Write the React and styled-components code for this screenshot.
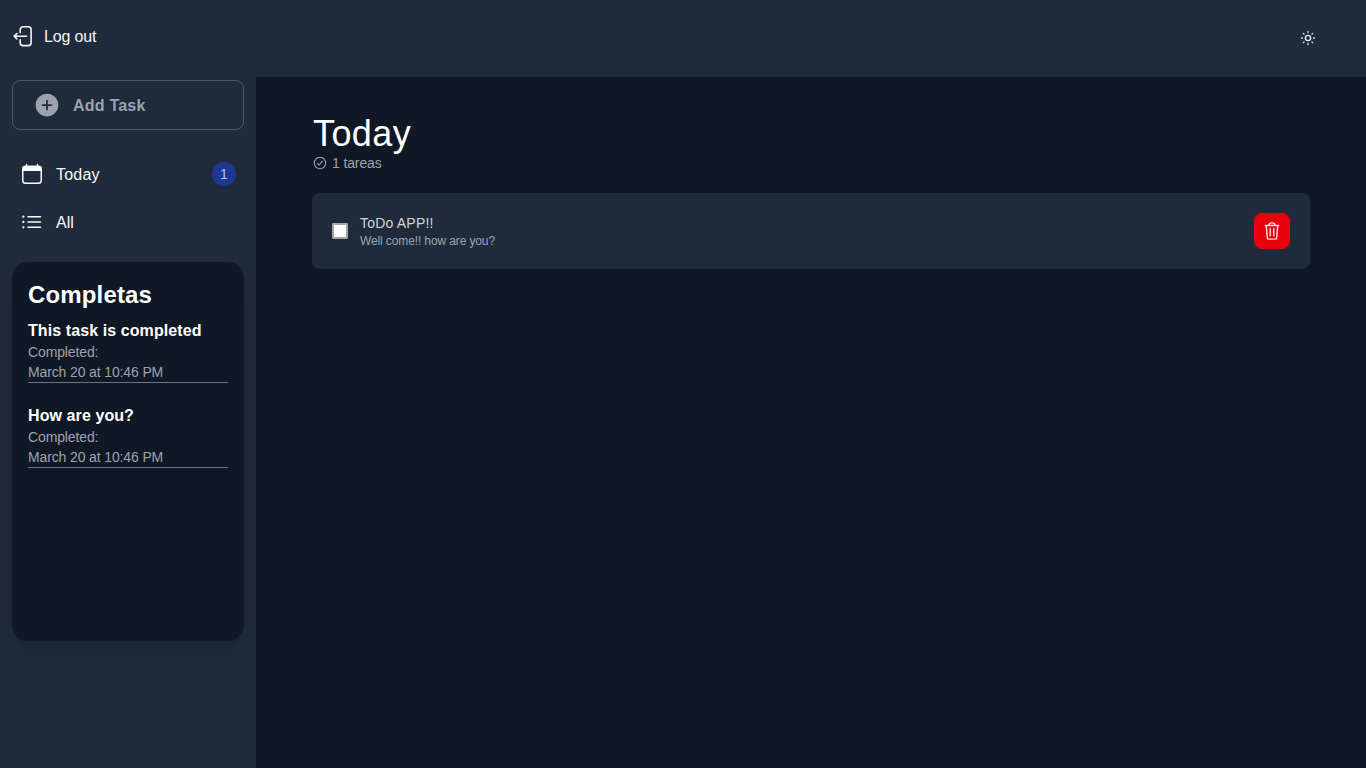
import React from "react";
import styled, { createGlobalStyle } from "styled-components";
import { IoAddCircle } from "react-icons/io5";

const GlobalStyle = createGlobalStyle`
  *, *::before, *::after { box-sizing: border-box; }
  body {
    margin: 0;
    background: #101826;
    color: #fff;
    font: 16px/24px "Liberation Sans", Arial, sans-serif;
    overflow: hidden;
  }
  h1, h2, h3, p { margin: 0; padding: 0; }
  svg { display: block; flex: none; }
`;

const Page = styled.div`
  display: flex;
  flex-direction: column;
  height: 100vh;
`;

const Header = styled.header`
  display: flex;
  align-items: center;
  justify-content: space-between;
  height: 77px;
  padding: 0 50px 4px 12px;
  background: #1f2b3a;
`;

const LogoutButton = styled.button`
  display: flex;
  align-items: center;
  gap: 10px;
  padding: 0 0 1px;
  border: 0;
  background: none;
  color: #f3f4f6;
  font: inherit;
  letter-spacing: -0.15px;
`;

const Label = styled.span`
  padding-top: ${(props) => props.$drop ?? 1}px;
`;

const ThemeButton = styled.button`
  padding: 3px 0 0;
  border: 0;
  background: none;
  color: #e5e7eb;
`;

const Body = styled.div`
  display: flex;
  flex: 1;
  min-height: 0;
`;

const Sidebar = styled.aside`
  width: 256px;
  padding: 3px 12px 0;
  background: #1f2b3a;
`;

const AddTask = styled.button`
  display: flex;
  align-items: center;
  gap: 12px;
  width: 100%;
  height: 50px;
  padding: 0 20px;
  border: 1px solid #4b5563;
  border-radius: 8px;
  background: none;
  color: #9ca3af;
  font: bold 16px/24px "Liberation Sans", Arial, sans-serif;
  letter-spacing: 0.22px;
`;

const Nav = styled.nav`
  display: flex;
  flex-direction: column;
  gap: 8px;
  margin-top: 24px;
`;

const NavItem = styled.a`
  display: flex;
  align-items: center;
  gap: 12px;
  height: 40px;
  padding: 0 8px;
  color: #f9fafb;
  letter-spacing: ${(props) => props.$tracking ?? 0}px;
`;

const Badge = styled.span`
  display: grid;
  place-items: center;
  width: 24px;
  height: 24px;
  margin-left: auto;
  border-radius: 50%;
  background: #1d3793;
  color: #a9c8f5;
  font-size: 14px;
`;

const Completed = styled.section`
  height: 379px;
  margin-top: 20px;
  padding: 17px 16px 16px;
  border-radius: 16px;
  background: #101826;
  box-shadow: 0 10px 15px -3px rgba(0, 0, 0, 0.1), 0 4px 6px -4px rgba(0, 0, 0, 0.1);
`;

const CompletedTitle = styled.h2`
  font-size: 24px;
  line-height: 32px;
  margin-bottom: 8px;
  letter-spacing: 0.15px;
`;

const CompletedItem = styled.article`
  margin-bottom: 21px;
  border-bottom: 1px solid #6b7280;
`;

const CompletedName = styled.h3`
  font-size: 16px;
  line-height: 23px;
  letter-spacing: 0.09px;
`;

const CompletedDate = styled.p`
  font-size: 14px;
  line-height: 20px;
  letter-spacing: -0.13px;
  color: #9ca3af;
`;

const Main = styled.main`
  flex: 1;
  padding: 37px 56px;
`;

const Title = styled.h1`
  padding-left: 1px;
  font-size: 36px;
  line-height: 39px;
  font-weight: 400;
  letter-spacing: 0.4px;
`;

const Count = styled.p`
  display: flex;
  align-items: center;
  gap: 5px;
  padding-left: 1px;
  font-size: 14px;
  line-height: 20px;
  letter-spacing: -0.12px;
  color: #9ca3af;
`;

const Task = styled.article`
  display: flex;
  align-items: center;
  gap: 12px;
  height: 76px;
  margin-top: 20px;
  padding: 0 20px;
  border-radius: 8px;
  background: #1f2b3a;
`;

const Checkbox = styled.span`
  width: 16px;
  height: 16px;
  border: 2px solid #a3a5a8;
  border-radius: 1px;
  background: #fff;
`;

const TaskText = styled.div`
  flex: 1;
`;

const TaskName = styled.p`
  font-size: 14px;
  line-height: 20px;
  letter-spacing: 0.2px;
  color: #d1d5db;
`;

const TaskNote = styled.p`
  font-size: 12px;
  line-height: 16px;
  letter-spacing: -0.12px;
  color: #9ca3af;
`;

const DeleteButton = styled.button`
  display: grid;
  place-items: center;
  width: 36px;
  height: 36px;
  padding: 0;
  border: 0;
  border-radius: 8px;
  background: #e7000b;
  color: #fee2e2;
`;

const completed = [
  { name: "This task is completed", date: "March 20 at 10:46 PM" },
  { name: "How are you?", date: "March 20 at 10:46 PM" },
];

function LogoutIcon() {
  return (
    <svg width="22" height="22" viewBox="0 0 22 22" fill="none" stroke="currentColor" strokeWidth="1.6" strokeLinecap="round" strokeLinejoin="round">
      <path d="M8.2 7.6V4.6a2.8 2.8 0 0 1 2.8-2.8h5.3a2.8 2.8 0 0 1 2.8 2.8v13.2a2.8 2.8 0 0 1-2.8 2.8H11a2.8 2.8 0 0 1-2.8-2.8V14.8" />
      <path d="M14.6 11.2H2.4M4.9 8.6 2.2 11.2l2.7 2.6" />
    </svg>
  );
}

function SunIcon() {
  return (
    <svg width="16" height="16" viewBox="0 0 16 16" fill="none" stroke="currentColor" strokeLinecap="round">
      <circle cx="8" cy="8" r="2.6" strokeWidth="1.4" />
      <path strokeWidth="1.3" d="M8 1.5v1M8 13.5v1M1.5 8h1M13.5 8h1M3.4 3.4l.6.6M12 12l.6.6M3.4 12.6l.6-.6M12 4l.6-.6" />
    </svg>
  );
}

function CalendarIcon() {
  return (
    <svg width="24" height="24" viewBox="0 0 24 24" fill="none" stroke="currentColor" strokeWidth="1.5">
      <rect x="2.75" y="4.4" width="18.5" height="16.8" rx="2.6" />
      <path d="M2.2 9V6.6A2.8 2.8 0 0 1 5 3.8h14a2.8 2.8 0 0 1 2.8 2.8V9z" fill="currentColor" stroke="none" />
      <path d="M6.5 2.6v2.6M17.5 2.6v2.6" strokeLinecap="round" />
    </svg>
  );
}

function ListIcon() {
  return (
    <svg width="24" height="24" viewBox="0 0 24 24" fill="none" stroke="currentColor" strokeWidth="1.5" strokeLinecap="round">
      <path d="M8 6.7h12.5M8 12h12.5M8 17.3h12.5" />
      <path d="M3.4 6.7h.01M3.4 12h.01M3.4 17.3h.01" strokeWidth="2.3" />
    </svg>
  );
}

function CheckIcon() {
  return (
    <svg width="14" height="14" viewBox="0 0 14 14" fill="none" stroke="currentColor" strokeWidth="1.1" strokeLinecap="round" strokeLinejoin="round">
      <circle cx="7" cy="7" r="5.7" />
      <path d="M4.6 7.4 6.2 9l3.3-3.9" />
    </svg>
  );
}

function TrashIcon() {
  return (
    <svg width="20" height="20" viewBox="0 0 20 20" fill="none" stroke="currentColor" strokeWidth="1.4" strokeLinecap="round" strokeLinejoin="round">
      <path d="M3.2 4.5h13.6M6.8 4.3c.2-1.5 1.3-2.4 3.2-2.4s3 .9 3.2 2.4" />
      <path d="M4.3 4.7l1 12.1a1.5 1.5 0 0 0 1.5 1.3h6.4a1.5 1.5 0 0 0 1.5-1.3l1-12.1" />
      <path d="M8.2 7.5v7.4M11.8 7.5v7.4" />
    </svg>
  );
}

export default function App() {
  return (
    <Page>
      <GlobalStyle />
      <Header>
        <LogoutButton><LogoutIcon /><Label>Log out</Label></LogoutButton>
        <ThemeButton aria-label="Theme"><SunIcon /></ThemeButton>
      </Header>
      <Body>
        <Sidebar>
          <AddTask><IoAddCircle size={28} /><Label $drop={2}>Add Task</Label></AddTask>
          <Nav>
            <NavItem $tracking={0.2}><CalendarIcon /><Label $drop={2}>Today</Label><Badge>1</Badge></NavItem>
            <NavItem><ListIcon /><Label $drop={2}>All</Label></NavItem>
          </Nav>
          <Completed>
            <CompletedTitle>Completas</CompletedTitle>
            {completed.map((task) => (
              <CompletedItem key={task.name}>
                <CompletedName>{task.name}</CompletedName>
                <CompletedDate>Completed:</CompletedDate>
                <CompletedDate>{task.date}</CompletedDate>
              </CompletedItem>
            ))}
          </Completed>
        </Sidebar>
        <Main>
          <Title>Today</Title>
          <Count><CheckIcon />1 tareas</Count>
          <Task>
            <Checkbox role="checkbox" aria-checked="false" />
            <TaskText>
              <TaskName>ToDo APP!!</TaskName>
              <TaskNote>Well come!! how are you?</TaskNote>
            </TaskText>
            <DeleteButton aria-label="Delete"><TrashIcon /></DeleteButton>
          </Task>
        </Main>
      </Body>
    </Page>
  );
}
